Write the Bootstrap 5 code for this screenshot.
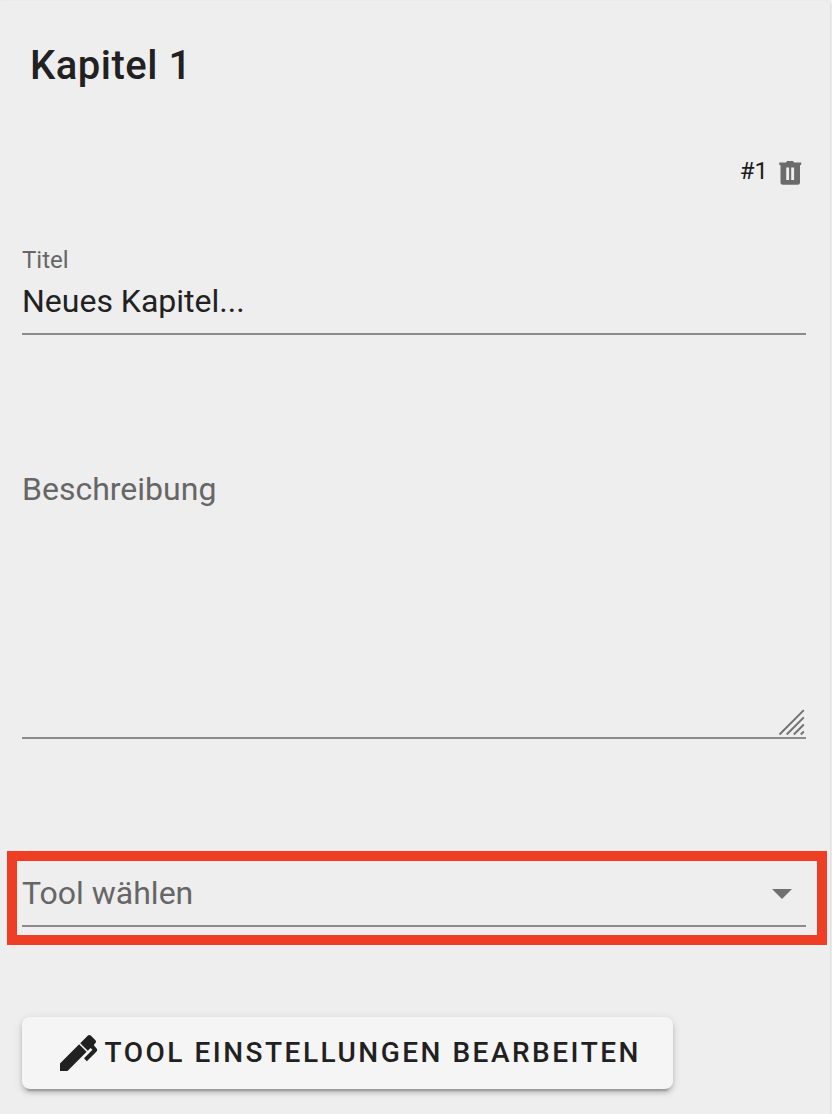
<!DOCTYPE html>
<html lang="de">
<head>
<meta charset="utf-8">
<meta name="viewport" content="width=device-width, initial-scale=1">
<title>Kapitel 1</title>
<link href="https://cdn.jsdelivr.net/npm/bootstrap@5.3.0/dist/css/bootstrap.min.css" rel="stylesheet">
<style>
body{font-family:Roboto,sans-serif;background:#f7f7f7;color:#212121;height:1114px;overflow:hidden;padding-top:1px}
.chapter{width:830px;height:1140px;background:#eee;box-shadow:0 1px 4px rgba(0,0,0,.22);padding-top:33px}
.chapter-title{font-size:40px;line-height:64px;font-weight:500;letter-spacing:.5px;padding-left:30px}
.chapter-tools{height:48px;margin-top:49px;padding-right:28px;font-size:24px;line-height:48px;color:#1c1c1c}
.chapter-tools svg{margin:4px 0 0 11px}
.line-field{width:784px;margin-left:22px;border-bottom:2px solid #8b8b8b;font-size:32px;line-height:40px}
.line-field label{color:#666;display:block}
.title-field{height:91px;margin-top:49px}
.title-field label{font-size:24px;line-height:32px;margin-bottom:5px}
.text-field{height:270px;margin-top:134px}
.marked{width:820px;height:94px;margin:112px 0 0 7px;border:10px solid #ee3f24}
.marked .line-field{width:784px;height:66px;margin-left:5px;padding-top:12px}
.edit-btn,.edit-btn:hover{width:651px;height:72px;margin:72px 0 0 22px;padding:0 0 0 32px;border:0;border-radius:8px;background:#f5f5f5;color:#212121;font-size:28px;line-height:72px;font-weight:500;letter-spacing:2.5px;box-shadow:0 6px 2px -4px rgba(0,0,0,.2),0 4px 4px rgba(0,0,0,.14),0 2px 10px rgba(0,0,0,.12)}
.edit-btn span{margin-left:2.6px}
</style>
</head>
<body>
<main class="chapter">
  <h1 class="chapter-title mb-0">Kapitel 1</h1>
  <div class="chapter-tools d-flex justify-content-end align-items-center">
    <span>#1</span>
    <svg width="23" height="24" viewBox="0 0 23 24" fill="#6b6b6b" fill-rule="evenodd"><path d="M.3 1.4H7L8 0h6l1 1.4h7.2v2.5H.3zM1.5 3.9H21V21.2a2.5 2.5 0 0 1-2.5 2.5H4a2.5 2.5 0 0 1-2.5-2.5zM7.2 6.4v12.6h2.9V6.4zm5 0v12.6h2.9V6.4z"/></svg>
  </div>
  <div class="line-field title-field">
    <label>Titel</label>
    <div>Neues Kapitel...</div>
  </div>
  <div class="line-field text-field d-flex justify-content-between">
    <label>Beschreibung</label>
    <svg class="align-self-end" width="28" height="28" viewBox="0 0 28 28" fill="none" stroke="#707070" stroke-width="1.9"><path d="M1.5 25.5 25.8 1.2M8.7 25.5 25.8 8.4M15.8 25.5l10-10M22.8 25.5l3-3"/></svg>
  </div>
  <div class="marked">
    <div class="line-field d-flex justify-content-between">
      <label>Tool wählen</label>
      <svg class="me-2" width="32" height="40" viewBox="0 0 32 40"><path fill="#707070" d="M6 16h20L16 26z"/></svg>
    </div>
  </div>
  <button class="edit-btn btn d-flex align-items-center" type="button">
    <svg class="flex-shrink-0" width="48" height="48" viewBox="0 0 24 24" fill="currentColor"><path d="M20.71 7.04c-.34.34-.67.67-.68 1-.03.32.31.65.63.96.48.5.95.95.93 1.44s-.53 1-1.04 1.5l-4.13 4.14L15 14.66l4.25-4.24-.96-.96-1.42 1.41-3.75-3.75 3.84-3.83c.39-.39 1.04-.39 1.41 0l2.34 2.34c.39.37.39 1.02 0 1.41M3 17.25l9.56-9.57 3.75 3.75L6.75 21H3z"/></svg>
    <span class="text-nowrap">TOOL EINSTELLUNGEN BEARBEITEN</span>
  </button>
</main>
<script src="https://cdn.jsdelivr.net/npm/bootstrap@5.3.0/dist/js/bootstrap.bundle.min.js"></script>
</body>
</html>
